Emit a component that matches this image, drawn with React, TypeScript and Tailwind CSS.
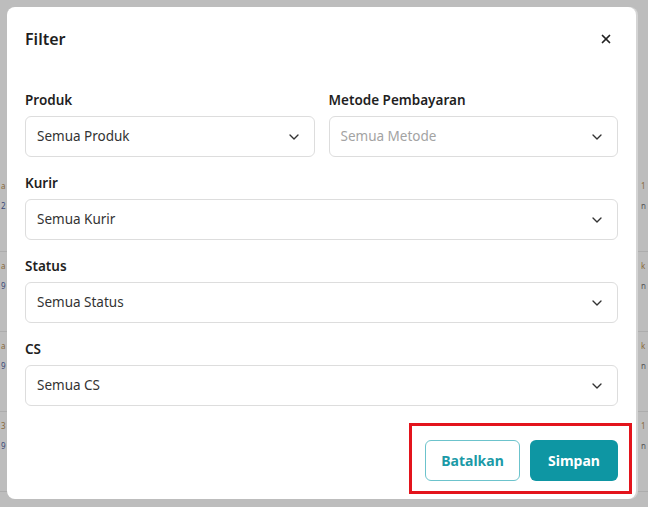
import { ChevronDown, X } from 'lucide-react';

const font = { fontFamily: '"Noto Sans", "Open Sans", sans-serif' };

function SelectBox({ value, placeholder }: { value: string; placeholder?: boolean }) {
    return (
        <div className="flex h-[41px] items-center justify-between rounded-md border border-[#dddddd] bg-white pl-[11px] pr-[12px]">
            <span className={`text-[13.5px] ${placeholder ? 'text-[#a3a3a3]' : 'text-[#333333]'}`}>{value}</span>
            <ChevronDown className="h-4 w-4 text-[#333333]" strokeWidth={2} />
        </div>
    );
}

function Field({ label, value, placeholder }: { label: string; value: string; placeholder?: boolean }) {
    return (
        <div className="flex flex-col">
            <label className="mb-[6px] h-5 text-[13.5px] font-semibold leading-5 text-[#1f1f1f]">{label}</label>
            <SelectBox value={value} placeholder={placeholder} />
        </div>
    );
}

// faint rows of the page behind the overlay
const bgRows = [
    { l1: 'a', l2: '2', r1: '1', r2: 'n' },
    { l1: 'a', l2: '9', r1: 'k', r2: 'n' },
    { l1: 'a', l2: '9', r1: 'k', r2: 'n' },
    { l1: '3', l2: '9', r1: '1', r2: 'n' },
];

export default function App() {
    return (
        <div className="relative h-[507px] w-[648px] overflow-hidden bg-[#bdbdbd]" style={font}>
            {/* Page behind the backdrop */}
            <div className="pt-[172px]">
                {bgRows.map((row, i) => (
                    <div key={i} className="flex h-[80px] justify-between border-b border-[#adadad] text-[8px] leading-[20px]">
                        <div className="flex flex-col pl-[1px] pt-[4px]">
                            <span className="text-[#8a6a3a]">{row.l1}</span>
                            <span className="text-[#3a4a7a]">{row.l2}</span>
                        </div>
                        <div className="flex flex-col pr-[2px] pt-[4px]">
                            <span className="text-[#8a6a3a]">{row.r1}</span>
                            <span className="text-[#555555]">{row.r2}</span>
                        </div>
                    </div>
                ))}
            </div>

            {/* Modal */}
            <div className="absolute left-[7px] top-[7px] h-[492px] w-[629px] rounded-lg bg-white px-[18px] shadow-[2px_0_0_#d4d4d4]">
                <div className="flex h-[63px] items-center justify-between">
                    <h2 className="text-[16px] font-semibold text-[#1f1f1f]">Filter</h2>
                    <X className="mr-[5px] h-[14px] w-[14px] text-[#222222]" strokeWidth={3} />
                </div>

                <div className="flex flex-col gap-4 pt-[20px]">
                    <div className="grid grid-cols-2 gap-[14px]">
                        <Field label="Produk" value="Semua Produk" />
                        <Field label="Metode Pembayaran" value="Semua Metode" placeholder />
                    </div>
                    <Field label="Kurir" value="Semua Kurir" />
                    <Field label="Status" value="Semua Status" />
                    <Field label="CS" value="Semua CS" />
                </div>

                <div className="mt-[34px] flex justify-end gap-[10px]">
                    <button className="h-[41px] w-[95px] rounded-md border border-[#6cc3cc] bg-white text-[14px] font-bold text-[#1b9aa7]">
                        Batalkan
                    </button>
                    <button className="h-[41px] w-[88px] rounded-md bg-[#0e96a3] text-[14px] font-bold text-white">
                        Simpan
                    </button>
                </div>
            </div>

            {/* Annotation highlight */}
            <div className="absolute left-[409px] top-[423px] h-[71px] w-[223px] border-[3px] border-[#e3141c]" />
        </div>
    );
}
